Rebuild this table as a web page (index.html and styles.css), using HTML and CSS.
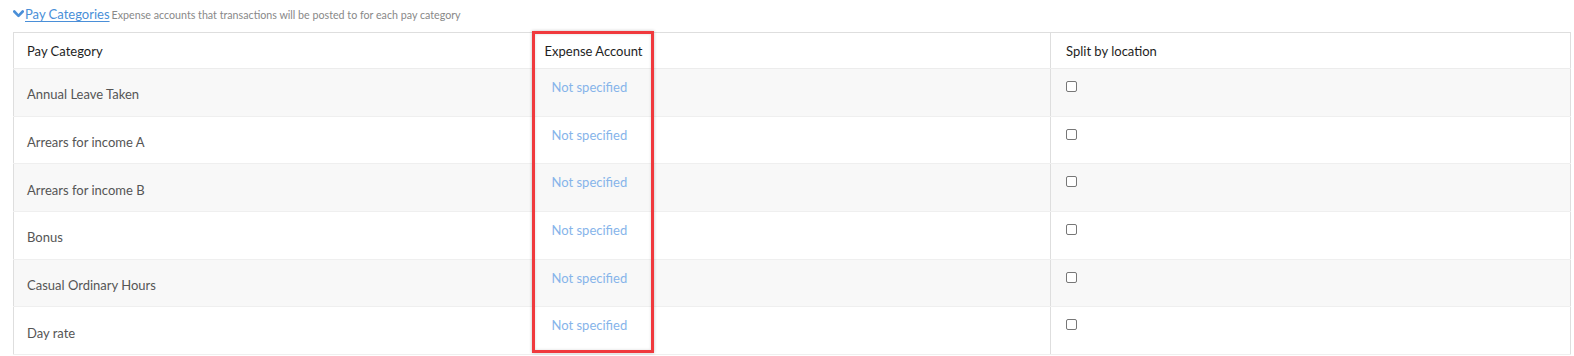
FILE: index.html
```html
<!DOCTYPE html>
<html>
<head>
<meta charset="utf-8">
<link rel="stylesheet" href="styles.css">
</head>
<body>
<div class="page">
  <div class="section-title">
    <a class="toggle" href="#"><svg class="chev" width="11" height="8" viewBox="0 0 11 8"><path d="M1.3 1.5 L5.5 5.8 L9.7 1.5" fill="none" stroke="#4a8fd8" stroke-width="2.6" stroke-linecap="round" stroke-linejoin="round"/></svg>Pay Categories </a>
    <span class="desc">Expense accounts that transactions will be posted to for each pay category</span>
  </div>
  <div class="table-wrap">
    <table class="grid">
      <colgroup>
        <col class="w1">
        <col class="w2">
        <col>
      </colgroup>
      <thead>
        <tr>
          <th class="c1">Pay Category</th>
          <th class="c2">Expense Account</th>
          <th class="c3">Split by location</th>
        </tr>
      </thead>
      <tbody>
        <tr><td class="c1">Annual Leave Taken</td><td class="c2"><a class="ns" href="#">Not specified</a></td><td class="c3"><span class="cb"></span></td></tr>
        <tr><td class="c1">Arrears for income A</td><td class="c2"><a class="ns" href="#">Not specified</a></td><td class="c3"><span class="cb"></span></td></tr>
        <tr><td class="c1">Arrears for income B</td><td class="c2"><a class="ns" href="#">Not specified</a></td><td class="c3"><span class="cb"></span></td></tr>
        <tr><td class="c1">Bonus</td><td class="c2"><a class="ns" href="#">Not specified</a></td><td class="c3"><span class="cb"></span></td></tr>
        <tr><td class="c1">Casual Ordinary Hours</td><td class="c2"><a class="ns" href="#">Not specified</a></td><td class="c3"><span class="cb"></span></td></tr>
        <tr><td class="c1">Day rate</td><td class="c2"><a class="ns" href="#">Not specified</a></td><td class="c3"><span class="cb"></span></td></tr>
      </tbody>
    </table>
    <div class="highlight"></div>
  </div>
</div>
</body>
</html>
```

FILE: styles.css
```css
html, body {
  margin: 0;
  padding: 0;
  background: #ffffff;
}
body {
  font-family: Lato, "Open Sans", "Liberation Sans", sans-serif;
  color: #444;
  overflow: hidden;
}
.page {
  padding: 6px 3px 0 13px;
}
.section-title {
  height: 26px;
  display: flex;
  align-items: baseline;
  white-space: nowrap;
}
.toggle {
  color: #4a8fd8;
  font-size: 13px;
  text-decoration: underline;
  text-underline-offset: 2px;
}
.chev {
  margin-right: 1px;
  vertical-align: 1px;
}
.desc {
  font-size: 10.7px;
  color: #888;
  margin-left: 2px;
}
.table-wrap {
  position: relative;
}
.grid {
  width: 1558px;
  border-collapse: collapse;
  border: 1px solid #dedede;
  table-layout: fixed;
  font-size: 13px;
}
.w1 { width: 518px; }
.w2 { width: 519px; }
.grid th {
  text-align: left;
  font-weight: 400;
  color: #1e1e1e;
  height: 36px;
  box-sizing: border-box;
  padding: 0;
  vertical-align: middle;
  border-bottom: 1px solid #ececec;
}
.grid th.c1 { padding-left: 13px; }
.grid th.c2 { padding-left: 13px; }
.grid th.c3 { padding-left: 15px; border-left: 1px solid #dedede; }
.grid tbody tr { height: 47.7px; }
.grid td {
  padding: 0;
  border-bottom: 1px solid #efefef;
  color: #555;
}
.grid tbody tr:nth-child(odd) td { background: #f8f8f8; }
.grid td.c1 { padding-left: 13px; vertical-align: middle; padding-top: 4px; }
.grid td.c2 { padding-left: 20px; vertical-align: top; padding-top: 10px; }
.grid td.c3 { padding-left: 15px; vertical-align: top; padding-top: 12px; border-left: 1px solid #dedede; }
.ns {
  color: #86b4ea;
  text-decoration: none;
}
.cb {
  display: block;
  width: 9px;
  height: 9px;
  border: 1px solid #777;
  border-radius: 2px;
  background: #fff;
}
.highlight {
  position: absolute;
  left: 519px;
  top: -1px;
  width: 116px;
  height: 316px;
  border: 3px solid #f0393d;
  box-shadow: 0 0 3px rgba(0,0,0,0.25), inset 0 0 3px rgba(0,0,0,0.15);
}
```
